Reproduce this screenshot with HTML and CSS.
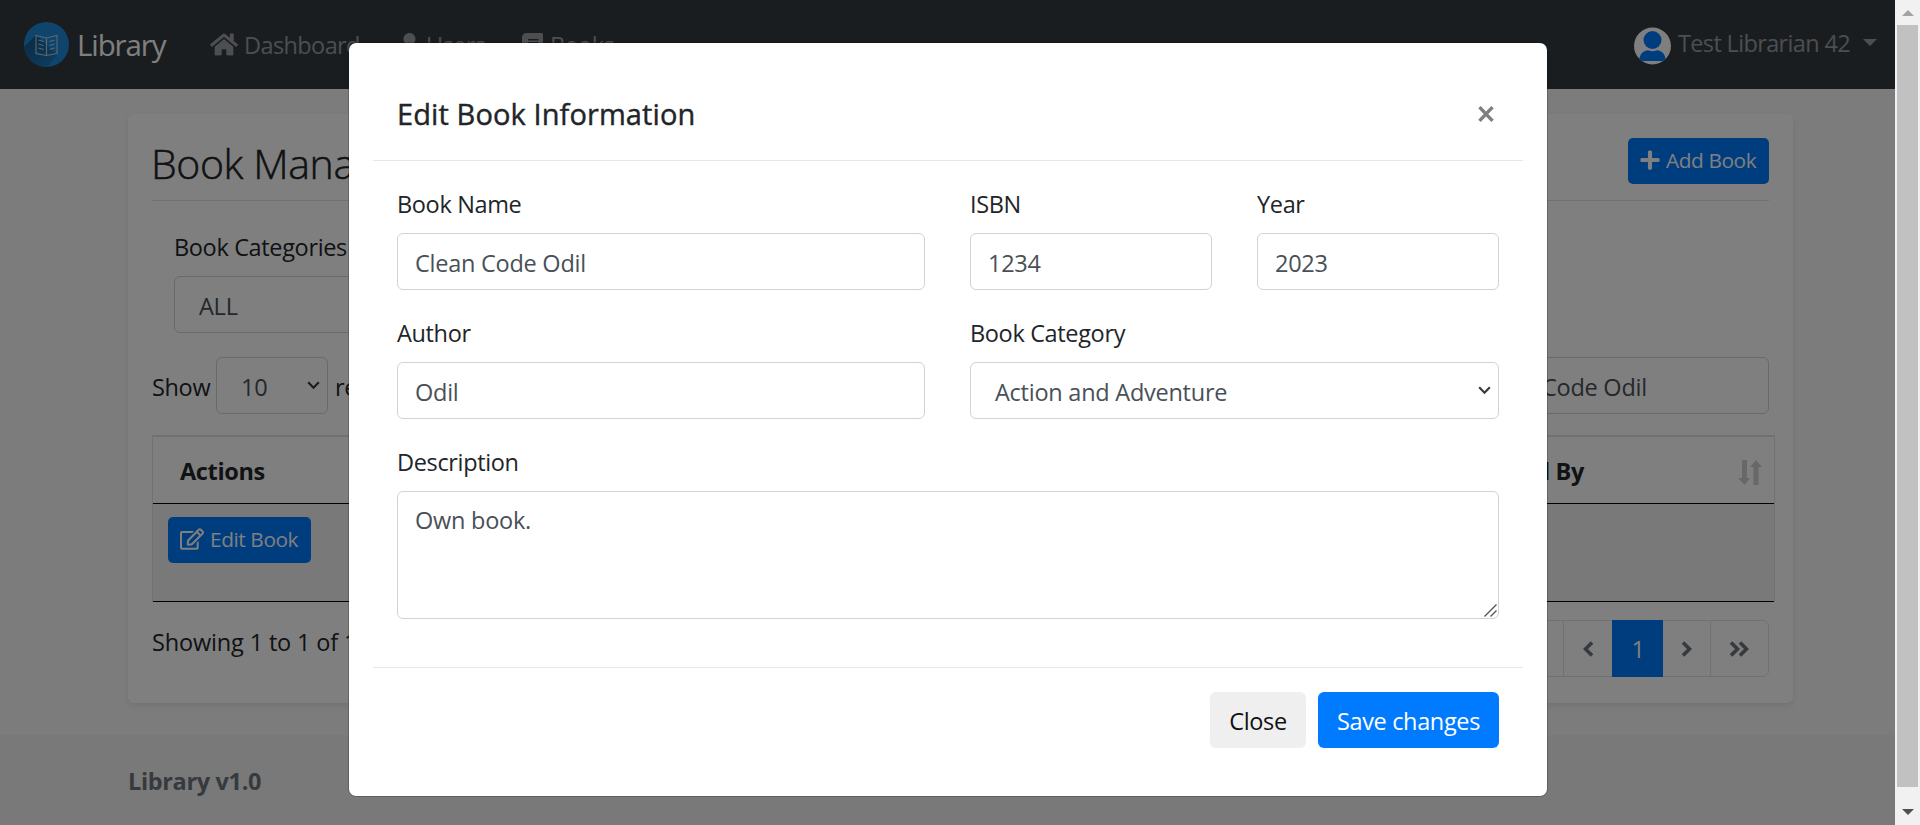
FILE: index.html
```html
<!DOCTYPE html>
<html lang="en">
<head>
<meta charset="utf-8">
<title>Library</title>
<link rel="stylesheet" href="styles.css">
</head>
<body>
<div class="viewport">
  <div class="page">
    <nav class="navbar">
      <div class="brand">
        <svg class="logo" viewBox="0 0 45 45"><defs><clipPath id="disc"><circle cx="22.5" cy="22.5" r="22.5"/></clipPath><linearGradient id="shade" x1="0" y1="0" x2="0.6" y2="1"><stop offset="0" stop-color="#124f82"/><stop offset="1" stop-color="#1c7fc6"/></linearGradient></defs><circle cx="22.5" cy="22.5" r="22.5" fill="#1f8bd8"/><path clip-path="url(#disc)" d="M12 13L-6 31 12 58 33 33z" fill="url(#shade)"/><path d="M12 13.500l10.500 2.500 10.500-2.500v18l-10.500 2-10.500-2zM22.500 16v17M14.500 18l5 1.500M14.500 22l5 1.500M14.500 26l5 1.500M30.500 18l-5 1.500M30.500 22l-5 1.500M30.500 26l-5 1.500" fill="none" stroke="#b9cfe0" stroke-width="1.100"/></svg>
        <span class="brand-name">Library</span>
      </div>
      <div class="nav-links">
        <a class="nav-link dash"><svg class="i-home" viewBox="0 0 576 512"><path fill="currentColor" d="M280.370 148.260L96 300.110V464a16 16 0 0 0 16 16l112.060-.29a16 16 0 0 0 15.920-16V368a16 16 0 0 1 16-16h64a16 16 0 0 1 16 16v95.640a16 16 0 0 0 16 16.050L464 480a16 16 0 0 0 16-16V300L295.670 148.260a12.190 12.190 0 0 0-15.300 0zM571.600 251.470L488 182.560V44.050a12 12 0 0 0-12-12h-56a12 12 0 0 0-12 12v72.610L318.470 43a48 48 0 0 0-61 0L4.340 251.470a12 12 0 0 0-1.600 16.900l25.500 31A12 12 0 0 0 45.150 301l235.220-193.740a12.190 12.190 0 0 1 15.300 0L530.900 301a12 12 0 0 0 16.900-1.600l25.500-31a12 12 0 0 0-1.700-16.930z"/></svg><span>Dashboard</span></a>
        <a class="nav-link users"><svg class="i-user" viewBox="0 0 448 512"><path fill="currentColor" d="M224 256c70.700 0 128-57.300 128-128S294.700 0 224 0 96 57.300 96 128s57.300 128 128 128zm89.600 32h-16.700c-22.200 10.200-46.900 16-72.900 16s-50.600-5.800-72.900-16h-16.700C60.200 288 0 348.200 0 422.400V464c0 26.500 21.500 48 48 48h352c26.500 0 48-21.500 48-48v-41.600c0-74.200-60.200-134.400-134.400-134.400z"/></svg><span>Users</span></a>
        <a class="nav-link books"><svg class="i-book" viewBox="0 0 448 512"><path fill="currentColor" d="M448 360V24c0-13.300-10.700-24-24-24H96C43 0 0 43 0 96v320c0 53 43 96 96 96h328c13.300 0 24-10.700 24-24v-16c0-7.500-3.500-14.300-8.900-18.700-4.200-15.400-4.200-59.300 0-74.700 5.400-4.300 8.900-11.100 8.900-18.600zM128 134c0-3.300 2.700-6 6-6h212c3.300 0 6 2.700 6 6v20c0 3.300-2.700 6-6 6H134c-3.300 0-6-2.700-6-6v-20zm0 64c0-3.300 2.700-6 6-6h212c3.300 0 6 2.700 6 6v20c0 3.300-2.700 6-6 6H134c-3.300 0-6-2.700-6-6v-20zm253.400 250H96c-17.700 0-32-14.300-32-32 0-17.600 14.400-32 32-32h285.400c-1.900 17.100-1.900 46.900 0 64z"/></svg><span>Books</span></a>
      </div>
      <div class="account">
        <svg class="avatar" viewBox="0 0 37 37"><defs><clipPath id="av"><circle cx="18.500" cy="18.500" r="18.500"/></clipPath></defs><circle cx="18.500" cy="18.500" r="18.500" fill="#fff"/><g clip-path="url(#av)" fill="#007bff"><circle cx="18.500" cy="12.500" r="9"/><path d="M5 33.500C5.500 26 10 22.700 14 22.700Q18.500 25 23 22.700C27 22.700 31.500 26 32 33.500z"/></g></svg>
        <span class="account-name">Test Librarian 42</span><i class="caret"></i>
      </div>
    </nav>
    <main class="card">
      <header class="card-head"><h1>Book Management</h1><button class="btn-sm add"><svg viewBox="0 0 448 512"><path fill="currentColor" d="M416 208H272V64c0-17.700-14.300-32-32-32h-32c-17.700 0-32 14.300-32 32v144H32c-17.700 0-32 14.300-32 32v32c0 17.700 14.300 32 32 32h144v144c0 17.700 14.300 32 32 32h32c17.700 0 32-14.300 32-32V304h144c17.700 0 32-14.300 32-32v-32c0-17.700-14.300-32-32-32z"/></svg><span>Add Book</span></button></header>
      <div class="filter"><label>Book Categories</label><div class="control select">ALL</div></div>
      <div class="tools">
        <span>Show</span><div class="control length">10<svg class="chev" viewBox="0 0 13 9"><path d="M1.200 1.200l5.300 5.600 5.300-5.600" fill="none" stroke="#343a40" stroke-width="2.100"/></svg></div><span>records</span>
        <div class="control search">Clean Code Odil</div>
      </div>
      <div class="table">
        <div class="thead"><b>Actions</b><b class="by">Added By</b><svg class="sort" viewBox="0 0 24 25"><path fill="#d0d0d0" d="M4 0h5v18h3L6.500 25 0 18h4zM15.500 25h5V7H24L18 0l-6 7h3.500z"/></svg></div>
        <div class="row"><button class="btn-sm edit"><svg viewBox="0 0 576 512"><path fill="currentColor" d="M402.300 344.900l32-32c5-5 13.700-1.500 13.700 5.700V464c0 26.500-21.500 48-48 48H48c-26.500 0-48-21.500-48-48V112c0-26.500 21.500-48 48-48h273.500c7.100 0 10.700 8.600 5.700 13.700l-32 32c-1.500 1.500-3.500 2.300-5.700 2.300H48v352h352V350.500c0-2.100.8-4.100 2.300-5.600zm156.600-201.800L296.300 405.700l-90.400 10c-26.200 2.900-48.500-19.200-45.600-45.600l10-90.400L432.900 17.100c22.900-22.900 59.900-22.900 82.700 0l43.200 43.200c22.900 22.900 22.900 60 .1 82.800zM460.100 174L402 115.900 216.200 301.800l-7.300 65.300 65.300-7.300L460.100 174zm64.800-79.700l-43.200-43.200c-4.100-4.100-10.800-4.100-14.800 0L436 82l58.100 58.100 30.900-30.900c4-4.200 4-10.800-.1-14.900z"/></svg><span>Edit Book</span></button></div>
      </div>
      <div class="table-foot">
        <span>Showing 1 to 1 of 1 records</span>
        <div class="pager">
          <i class="pg w58"></i>
          <i class="pg w49"><svg class="ang" viewBox="0 0 11 16"><path d="M9 1.500L2.500 8 9 14.500"/></svg></i>
          <i class="pg active">1</i>
          <i class="pg w47"><svg class="ang" viewBox="0 0 11 16"><path d="M2 1.500L8.500 8 2 14.500"/></svg></i>
          <i class="pg last"><svg class="ang2" viewBox="0 0 20 16"><path d="M2 1.500L8.500 8 2 14.500M11 1.500L17.500 8 11 14.500"/></svg></i>
        </div>
      </div>
    </main>
    <footer class="footer"><b>Library v1.0</b></footer>
    <div class="backdrop"></div>
    <section class="modal">
      <header class="modal-head"><h2>Edit Book Information</h2><svg class="close-x" viewBox="0 0 16 16"><path d="M1.500 1.200l13 13.600M14.500 1.200l-13 13.600" stroke="#7f7f7f" stroke-width="3.400"/></svg></header>
      <div class="modal-body">
        <div class="field wide"><label>Book Name</label><div class="control">Clean Code Odil</div></div>
        <div class="field"><label>ISBN</label><div class="control">1234</div></div>
        <div class="field"><label>Year</label><div class="control">2023</div></div>
        <div class="field wide"><label>Author</label><div class="control">Odil</div></div>
        <div class="field wide"><label>Book Category</label><div class="control select">Action and Adventure<svg class="chev" viewBox="0 0 13 9"><path d="M1.200 1.200l5.300 5.600 5.300-5.600" fill="none" stroke="#343a40" stroke-width="2.100"/></svg></div></div>
        <div class="field full"><label>Description</label><div class="control area">Own book.<svg class="grip" viewBox="0 0 13 13"><path d="M.5 12.500l12-12M6.500 12.500l6-6" stroke="#555" stroke-width="1.400"/></svg></div></div>
      </div>
      <footer class="modal-foot"><button class="btn light">Close</button><button class="btn primary">Save changes</button></footer>
    </section>
  </div>
  <div class="scrollbar"><i class="up"></i><i class="thumb"></i><i class="down"></i></div>
</div>
</body>
</html>
```
FILE: styles.css
```css
* { box-sizing: border-box; }
body { margin: 0; font-family: "Open Sans", "Noto Sans", sans-serif; font-size: 23.5px; line-height: 36px; letter-spacing: -.35px; color: #212529; overflow: hidden; }
h1, h2 { margin: 0; }
i { font-style: normal; }
button { border: 0; font: inherit; letter-spacing: inherit; }
span, label, h1, h2, b { white-space: nowrap; }
.viewport { display: flex; width: 1920px; height: 825px; }
.page { position: relative; width: 1895px; height: 825px; overflow: hidden; background: #f8f8f8; }
.navbar { display: flex; height: 89px; background: #343a40; padding: 0 18px 0 24px; }
.brand { display: flex; align-items: center; width: 186px; gap: 8px; }
.logo { width: 45px; height: 45px; }
.brand-name { font-size: 29.5px; color: #fff; letter-spacing: -1.1px; padding-top: 1px; }
.nav-links { display: flex; align-items: center; flex: 1; color: #9a9da0; letter-spacing: -.6px; }
.nav-link { display: flex; align-items: center; }
.dash { width: 189px; gap: 6px; }
.users { width: 123px; gap: 6px; }
.books { gap: 7px; }
.i-home { width: 28px; height: 25px; }
.i-user { width: 21px; height: 24px; }
.i-book { width: 21px; height: 24px; }
.account { display: flex; align-items: center; color: #9a9da0; height: 86px; letter-spacing: -.65px; }
.avatar { width: 37px; height: 38px; margin: 6px 7px 0 0; }
.account-name { width: 171px; }
.caret { margin: 0 0 2px 14px; border: 7px solid transparent; border-top-color: #9a9da0; border-bottom: 0; }
.card { width: 1665px; height: 589px; margin: 25px 0 0 128px; padding: 24px; background: #fff; border-radius: 6px; box-shadow: 0 3px 6px rgba(0,0,0,.08); }
.card-head { display: flex; justify-content: space-between; height: 63px; border-bottom: 1px solid #e3e3e3; }
h1 { font-size: 41px; font-weight: 300; line-height: 50px; letter-spacing: -.4px; margin-left: -1px; -webkit-text-stroke: .5px #212529; }
.btn-sm { display: flex; align-items: center; height: 46px; border-radius: 5px; background: #007bff; color: #fff; font-size: 20.800px; padding: 0 0 2px 12px; letter-spacing: -.4px; }
.add { width: 141px; gap: 6px; }
.add svg { width: 20px; height: 22px; }
.edit { width: 143px; gap: 6px; }
.edit svg { width: 24px; height: 22px; }
.filter { padding: 28px 22px 0; }
.filter label { display: block; height: 47px; }
.control { position: relative; height: 57px; border: 1px solid #ced4da; border-radius: 6px; background: #fff; color: #495057; padding: 10px 17px 0; line-height: 38px; letter-spacing: -.25px; white-space: nowrap; }
.select { padding-left: 24px; }
.filter .control { width: 500px; }
.tools { display: flex; align-items: center; margin-top: 24px; }
.tools > span { padding-top: 2px; }
.tools > span:first-child { width: 64px; }
.tools .length { width: 112px; margin-right: 7px; padding-left: 24px; }
.tools .search { width: 311px; margin-left: auto; }
.chev { position: absolute; right: 7px; top: 23px; width: 13px; height: 9px; }
.table { width: 1623px; margin-top: 21px; border: 1px solid #dee2e6; border-top-width: 2px; border-bottom: 0; }
.thead { display: flex; align-items: center; height: 67px; border-bottom: 1px solid #000; padding: 2px 12px 0 27px; }
.sort { width: 24px; height: 25px; margin-top: 3px; }
.thead .by { margin-left: auto; margin-right: 154px; }
.row { height: 98px; background: #f2f2f2; border-bottom: 1px solid #000; padding: 13px 15px; }
.table-foot { display: flex; justify-content: space-between; padding-top: 18px; }
.table-foot span { padding-top: 4px; letter-spacing: -.15px; }
.pager { display: flex; height: 57px; }
.pg { display: flex; align-items: center; justify-content: center; border: 1px solid #dee2e6; border-right: 0; color: #6c757d; }
.w58 { width: 58px; }
.w49 { width: 49px; }
.w47 { width: 47px; border-left: 0; }
.active { width: 51px; background: #007bff; border-color: #007bff; color: #fff; }
.last { width: 59px; border-right: 1px solid #dee2e6; border-radius: 0 6px 6px 0; padding-right: 2px; }
.ang { width: 11px; height: 16px; }
.ang2 { width: 20px; height: 16px; }
.ang path, .ang2 path { fill: none; stroke: #6c757d; stroke-width: 3.600; }
.footer { height: 90px; margin-top: 32px; background: #f3f3f3; color: #6c757d; padding: 28px 128px; }
.backdrop { position: absolute; inset: 0; background: rgba(0,0,0,.5); }
.modal { position: absolute; left: 349px; top: 43px; width: 1198px; height: 753px; background: #fff; border-radius: 7px; padding: 24px; outline: 1px solid rgba(0,0,0,.2); }
.modal-head { display: flex; justify-content: space-between; height: 94px; border-bottom: 1px solid #e5e8eb; padding: 28px 29px 0 24px; }
h2 { font-size: 29px; font-weight: 500; line-height: 38px; letter-spacing: .1px; -webkit-text-stroke: .4px #212529; }
.close-x { width: 16px; height: 16px; margin-top: 11px; }
.modal-body { display: grid; grid-template-columns: 242px 241px 242px 242px; column-gap: 45px; padding: 25px 23px 0 24px; height: 507px; border-bottom: 1px solid #e5e8eb; align-content: start; }
.field { height: 129px; }
.field label { display: block; height: 47px; }
.wide { grid-column: span 2; }
.full { grid-column: span 4; }
.area { height: 128px; padding-top: 9px; }
.grip { position: absolute; right: 1px; bottom: 1px; width: 13px; height: 13px; }
.modal-foot { display: flex; justify-content: flex-end; gap: 12px; padding: 24px 24px 0; }
.btn { height: 56px; border-radius: 6px; padding: 2px 0 0; }
.light { width: 96px; background: #efefef; color: #111; }
.primary { width: 181px; background: #007bff; color: #fff; }
.scrollbar { display: flex; flex-direction: column; align-items: center; width: 25px; background: #f1f1f1; }
.up { margin-top: 10px; border: 6px solid transparent; border-bottom-color: #a3a3a3; border-top: 0; }
.thumb { width: 21px; height: 762px; margin-top: 9px; background: #c1c1c1; }
.down { margin-top: 22px; border: 6px solid transparent; border-top-color: #505050; border-bottom: 0; }
```
